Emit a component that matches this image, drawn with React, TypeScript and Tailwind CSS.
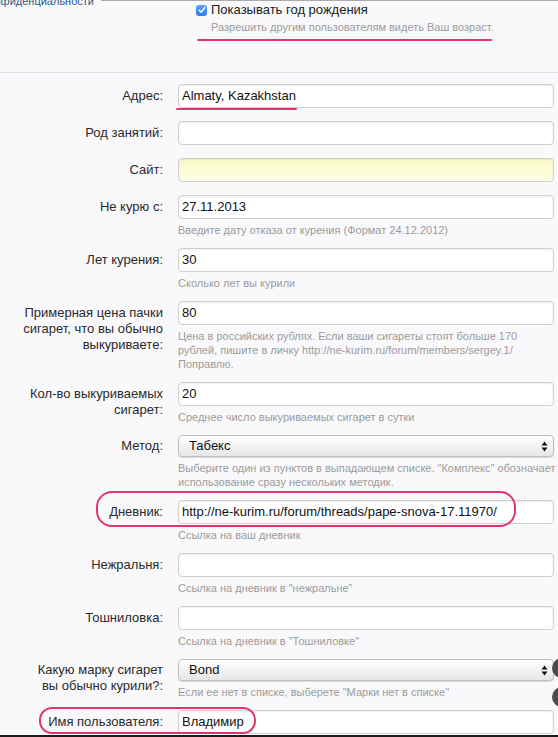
import React from 'react';

type Field = {
  label: string[];
  value?: string;
  hint?: string[];
  kind?: 'input' | 'select' | 'yellow';
};

const fields: Field[] = [
  { label: ['Адрес:'], value: 'Almaty, Kazakhstan' },
  { label: ['Род занятий:'] },
  { label: ['Сайт:'], kind: 'yellow' },
  { label: ['Не курю с:'], value: '27.11.2013', hint: ['Введите дату отказа от курения (Формат 24.12.2012)'] },
  { label: ['Лет курения:'], value: '30', hint: ['Сколько лет вы курили'] },
  {
    label: ['Примерная цена пачки', 'сигарет, что вы обычно', 'выкуриваете:'],
    value: '80',
    hint: [
      'Цена в российских рублях. Если ваши сигареты стоят больше 170',
      'рублей, пишите в личку http://ne-kurim.ru/forum/members/sergey.1/',
      'Поправлю.',
    ],
  },
  { label: ['Кол-во выкуриваемых', 'сигарет:'], value: '20', hint: ['Среднее число выкуриваемых сигарет в сутки'] },
  {
    label: ['Метод:'],
    value: 'Табекс',
    kind: 'select',
    hint: [
      'Выберите один из пунктов в выпадающем списке. "Комплекс" обозначает',
      'использование сразу нескольких методик.',
    ],
  },
  { label: ['Дневник:'], value: 'http://ne-kurim.ru/forum/threads/pape-snova-17.11970/', hint: ['Ссылка на ваш дневник'] },
  { label: ['Нежральня:'], hint: ['Ссылка на дневник в "нежральне"'] },
  { label: ['Тошниловка:'], hint: ['Ссылка на дневник в "Тошниловке"'] },
  {
    label: ['Какую марку сигарет', 'вы обычно курили?:'],
    value: 'Bond',
    kind: 'select',
    hint: ['Если ее нет в списке, выберете "Марки нет в списке"'],
  },
  { label: ['Имя пользователя:'], value: 'Владимир' },
];

const SelectArrows = () => (
  <svg width="7" height="11" viewBox="0 0 7 11">
    <path d="M3.5 0.5 L6.5 4.5 H0.5 Z" fill="#111" />
    <path d="M3.5 10.5 L6.5 6.5 H0.5 Z" fill="#111" />
  </svg>
);

const FieldRow: React.FC<{ field: Field }> = ({ field }) => {
  const { label, value, hint, kind = 'input' } = field;
  const isSelect = kind === 'select';

  return (
    <div className={`flex ${hint ? 'pb-[11px]' : 'pb-[13px]'}`}>
      <div
        className={`w-[163px] shrink-0 text-right text-[13px] leading-[16px] text-[#2a2a2a] ${
          isSelect ? 'pt-[3px]' : 'pt-[4px]'
        }`}
      >
        {label.map((l) => (
          <div key={l} className="whitespace-nowrap">
            {l}
          </div>
        ))}
      </div>
      <div className="ml-[15px] w-[376px] shrink-0">
        {isSelect ? (
          <div className="flex h-[22px] items-center justify-between rounded-[4px] border border-[#bdbdbd] bg-gradient-to-b from-white to-[#e6e6e6] pl-[10px] pr-[5px] text-[13px] text-[#111] shadow-[0_1px_1px_rgba(0,0,0,0.12)]">
            <span>{value}</span>
            <SelectArrows />
          </div>
        ) : (
          <div
            className={`flex h-[24px] items-center rounded-[4px] border border-[#cfcfcf] px-[3px] text-[13px] text-[#111] shadow-[inset_0_1px_2px_rgba(0,0,0,0.07)] ${
              kind === 'yellow' ? 'bg-gradient-to-b from-[#fafac8] to-[#ffffe4]' : 'bg-white'
            }`}
          >
            {value}
          </div>
        )}
        {hint && (
          <div className="mt-[4px] text-[11px] leading-[14px] text-[#9b9b9b]">
            {hint.map((h) => (
              <div key={h} className="whitespace-nowrap">
                {h}
              </div>
            ))}
          </div>
        )}
      </div>
    </div>
  );
};

export default function App() {
  return (
    <div className="relative h-[737px] w-[558px] overflow-hidden bg-[#f9f9fb] font-['Liberation_Sans',Arial,sans-serif]">
      {/* top: tail of the privacy section */}
      <div className="border-b border-[#d9e4f1]">
        <div className="ml-[101px] h-px bg-[#ababab]" />
        <div className="flex h-[71px]">
          <div className="w-[178px] shrink-0">
            <div className="-mt-[7px] flex w-[94px] justify-end whitespace-nowrap text-[11px] leading-[14px] text-[#2f5785]">
              Конфиденциальности
            </div>
          </div>
          <div className="pl-[18px] pt-[1px]">
            <div className="flex h-[16px] items-center gap-[4px] text-[13px] text-[#1a1a1a]">
              <span className="flex h-[11px] w-[11px] items-center justify-center rounded-[3px] bg-gradient-to-b from-[#5aa6fb] to-[#2a7ef0]">
                <svg width="8" height="8" viewBox="0 0 8 8">
                  <path d="M1.3 4.2 L3.2 6.1 L6.8 1.6" fill="none" stroke="#fff" strokeWidth="1.5" strokeLinecap="round" strokeLinejoin="round" />
                </svg>
              </span>
              <span>Показывать год рождения</span>
            </div>
            <div className="mt-[2px] pl-[15px] text-[11px] leading-[14px] text-[#9b9b9b]">
              Разрешить другим пользователям видеть Ваш возраст.
            </div>
          </div>
        </div>
      </div>

      <div className="pt-[11px]">
        {fields.map((f) => (
          <FieldRow key={f.label.join(' ')} field={f} />
        ))}
      </div>

      {/* pink annotations */}
      <div className="absolute left-[197px] top-[39px] h-[2px] w-[295px] rounded-full bg-[#e5336c]" />
      <div className="absolute left-[176px] top-[108px] h-[2px] w-[121px] rounded-full bg-[#e5336c]" />
      <div className="absolute left-[96px] top-[491px] h-[36px] w-[420px] rounded-[16px] border-2 border-[#e5336c]" />
      <div className="absolute left-[39px] top-[707px] h-[27px] w-[217px] rounded-[13px] border-2 border-[#e5336c]" />

      {/* floating buttons at the right edge */}
      <div className="absolute left-[552px] top-[658px] h-[20px] w-[20px] rounded-full bg-[#4b4b4b]" />
      <div className="absolute left-[552px] top-[687px] h-[20px] w-[20px] rounded-full bg-[#4b4b4b]" />

      <div className="absolute bottom-0 left-0 h-[2px] w-full bg-[#1c1c1c]" />
    </div>
  );
}
